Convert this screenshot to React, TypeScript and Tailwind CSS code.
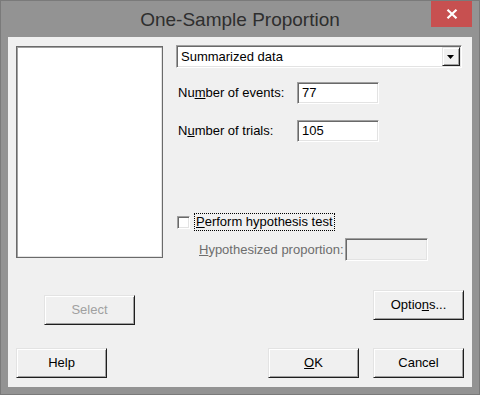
import React from "react";

// classic 3D borders
const raised =
  "bg-[#f0f0f0] border border-t-[#e3e3e3] border-l-[#e3e3e3] border-r-[#1e1e1e] border-b-[#1e1e1e] shadow-[inset_1px_1px_0_#ffffff,inset_-1px_-1px_0_#a0a0a0]";
const sunken =
  "border border-t-[#a0a0a0] border-l-[#a0a0a0] border-r-white border-b-white shadow-[inset_1px_1px_0_#696969,inset_-1px_-1px_0_#e3e3e3]";

function Button({ children, className = "", disabled = false }: { children: React.ReactNode; className?: string; disabled?: boolean }) {
  return (
    <button
      type="button"
      className={`${raised} w-[91px] h-[30px] flex items-center justify-center text-[13px] ${
        disabled ? "text-[#a0a0a0]" : "text-black"
      } ${className}`}
    >
      {children}
    </button>
  );
}

function Field({ value = "", disabled = false, className = "" }: { value?: string; disabled?: boolean; className?: string }) {
  return (
    <div
      className={`${sunken} ${disabled ? "bg-[#f0f0f0]" : "bg-white"} flex items-center pl-[4px] text-[13px] text-black ${className}`}
    >
      {value}
    </div>
  );
}

export default function App() {
  return (
    <div className="w-[480px] h-[395px] bg-[#939393] border border-[#7a7a7a] flex flex-col font-['Liberation_Sans',Arial,sans-serif] select-none">
      {/* title bar */}
      <div className="flex h-[36px] shrink-0">
        <div className="w-[48px]" />
        <div className="flex-1 text-center text-[19px] leading-[22px] pt-[8px] text-[#2e2e2e]">
          One-Sample Proportion
        </div>
        <div className="w-[41px] h-[26px] mr-[7px] bg-[#c75050] flex items-center justify-center">
          <svg width="12" height="10" viewBox="0 0 12 10">
            <path d="M1.5 0.8 L10.5 9.2 M10.5 0.8 L1.5 9.2" stroke="#ffffff" strokeWidth="2.2" fill="none" />
          </svg>
        </div>
      </div>

      {/* client area */}
      <div className="mx-[7px] w-[464px] h-[350px] bg-[#f0f0f0] flex flex-col text-[13px] text-black">
        <div className="flex h-[288px]">
          {/* left column */}
          <div className="ml-[8px] flex flex-col">
            <div className="mt-[9px] w-[147px] h-[213px] bg-white border border-[#6a6a6a] shadow-[inset_1px_1px_0_#a0a0a0,inset_-1px_-1px_0_#e3e3e3]" />
            <Button disabled className="mt-[37px] ml-[28px] h-[29px]">
              Select
            </Button>
          </div>

          {/* right column */}
          <div className="ml-[13px] mt-[8px] flex flex-col">
            <div className={`${sunken} bg-white w-[286px] h-[23px] flex items-center`}>
              <span className="flex-1 pl-[4px]">Summarized data</span>
              <div className={`${raised} w-[18px] h-[19px] mr-[1px] flex items-center justify-center`}>
                <svg width="8" height="4" viewBox="0 0 8 4">
                  <path d="M0 0 H7 L3.5 4 Z" fill="#000" />
                </svg>
              </div>
            </div>

            <div className="mt-[14px] flex items-center">
              <span className="w-[121px] pl-[2px]">
                Nu<u>m</u>ber of events:
              </span>
              <Field value="77" className="w-[82px] h-[22px]" />
            </div>

            <div className="mt-[16px] flex items-center">
              <span className="w-[121px] pl-[2px]">
                N<u>u</u>mber of trials:
              </span>
              <Field value="105" className="w-[82px] h-[22px]" />
            </div>

            <div className="mt-[71px] h-[18px] flex items-center">
              <div className={`${sunken} bg-white w-[13px] h-[13px] ml-[1px]`} />
              <span className="ml-[4px] h-[18px] px-[1px] flex items-center border border-dotted border-black">
                <u>P</u>erform hypothesis test
              </span>
            </div>

            <div className="mt-[7px] flex items-center">
              <span className="ml-[23px] w-[146px] text-[#6d6d6d]">
                <u>H</u>ypothesized proportion:
              </span>
              <Field disabled className="w-[83px] h-[23px]" />
            </div>

            <Button className="mt-[29px] ml-[197px]">
              Optio<u>n</u>s...
            </Button>
          </div>
        </div>

        {/* bottom buttons */}
        <div className="mt-[23px] flex">
          <Button className="ml-[8px]">Help</Button>
          <Button className="ml-[161px]">
            <u>O</u>K
          </Button>
          <Button className="ml-[14px]">Cancel</Button>
        </div>
      </div>
    </div>
  );
}
